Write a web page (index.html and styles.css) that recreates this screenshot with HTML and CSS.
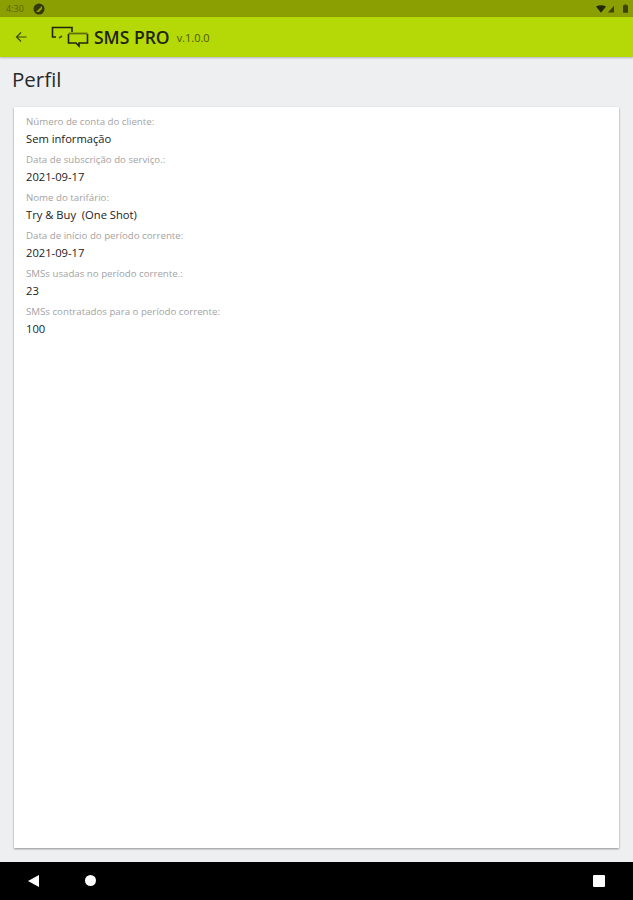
FILE: index.html
```html
<!DOCTYPE html>
<html lang="pt">
<head>
    <meta charset="UTF-8">
    <meta name="viewport" content="width=device-width, initial-scale=1.0">
    <title>SMS PRO - Perfil</title>
    <link rel="stylesheet" href="styles.css">
</head>
<body>
    <div class="status-bar">
        <span class="clock">4:30</span>
        <svg class="status-app" viewBox="0 0 12 12" width="12" height="12">
            <circle cx="6" cy="6" r="5.5" fill="#33390a" />
            <path d="M3 9 L9 3 L9 6 L6 9 Z" fill="#8f9f0a" />
        </svg>
        <div class="status-icons">
            <svg viewBox="0 0 12 9" width="10" height="8"><path d="M0 1.5 Q6 -1.5 12 1.5 L6 9 Z" fill="#23280a" /></svg>
            <svg class="signal" viewBox="0 0 8 9" width="6" height="8"><path d="M8 0 L8 9 L0 9 Z" fill="#3a4208" /></svg>
            <svg viewBox="0 0 6 10" width="5" height="9"><path d="M2 0 H4 V1 H6 V10 H0 V1 H2 Z" fill="#3a4208" /></svg>
        </div>
    </div>

    <header class="app-bar">
        <svg class="back" viewBox="0 0 12 12" width="12" height="12">
            <path d="M11.5 6 H1.5 M6 1.5 L1.5 6 L6 10.5" fill="none" stroke="#3d4a08" stroke-width="1.2" />
        </svg>
        <svg class="logo" viewBox="0 0 38 22" width="38" height="22">
            <path d="M21 6 V1.5 H1.5 V11 H5" fill="none" stroke="#20240a" stroke-width="1.6" />
            <path d="M8 12 L11 10" fill="none" stroke="#4a5608" stroke-width="1.6" />
            <path d="M17.5 8 V17 H25 L28 20 V17 H36.5 V8" fill="none" stroke="#20240a" stroke-width="1.6" />
            <path d="M17.5 7.5 H36.5" fill="none" stroke="#5f6e08" stroke-width="1.8" />
        </svg>
        <span class="brand">SMS PRO</span>
        <span class="version">v.1.0.0</span>
    </header>

    <main class="content">
        <h1 class="page-title">Perfil</h1>
        <section class="card">
            <div class="field">
                <div class="field-label">Número de conta do cliente:</div>
                <div class="field-value">Sem informação</div>
            </div>
            <div class="field">
                <div class="field-label">Data de subscrição do serviço.:</div>
                <div class="field-value">2021-09-17</div>
            </div>
            <div class="field">
                <div class="field-label">Nome do tarifário:</div>
                <div class="field-value">Try &amp; Buy &nbsp;(One Shot)</div>
            </div>
            <div class="field">
                <div class="field-label">Data de início do período corrente:</div>
                <div class="field-value">2021-09-17</div>
            </div>
            <div class="field">
                <div class="field-label">SMSs usadas no período corrente.:</div>
                <div class="field-value">23</div>
            </div>
            <div class="field">
                <div class="field-label">SMSs contratados para o período corrente:</div>
                <div class="field-value">100</div>
            </div>
        </section>
    </main>

    <nav class="nav-bar">
        <span class="nav-back"></span>
        <span class="nav-home"></span>
        <span class="nav-recent"></span>
    </nav>
</body>
</html>
```

FILE: styles.css
```css
* {
    box-sizing: border-box;
}
body {
    margin: 0;
    width: 633px;
    height: 900px;
    overflow: hidden;
    display: flex;
    flex-direction: column;
    background-color: #eeeff1;
    font-family: "Open Sans", "Liberation Sans", sans-serif;
}
.status-bar {
    height: 17px;
    flex-shrink: 0;
    display: flex;
    align-items: center;
    padding: 0 5px 0 6px;
    background: #8b9e02;
}
.clock {
    font-size: 9px;
    color: #5a6608;
}
.status-app {
    margin-left: 9px;
}
.status-icons {
    margin-left: auto;
    display: flex;
    align-items: center;
    gap: 2px;
}
.signal {
    margin-right: 7px;
}
.app-bar {
    height: 40px;
    flex-shrink: 0;
    display: flex;
    align-items: center;
    padding: 0 0 0 15px;
    background: #b5d906;
    box-shadow: 0 1px 2px rgba(0, 0, 0, 0.25);
    position: relative;
}
.logo {
    margin-left: 24px;
}
.brand {
    margin-left: 5px;
    font-size: 17.5px;
    font-weight: 600;
    color: #20240a;
}
.version {
    margin-left: 7px;
    font-size: 11px;
    color: #4c5a08;
}
.content {
    flex: 1;
    display: flex;
    flex-direction: column;
    padding: 0 14px 14px;
    min-height: 0;
}
.page-title {
    margin: 9px 0 14px -2px;
    font-size: 20.5px;
    line-height: 27px;
    font-weight: 400;
    color: #2a2a2a;
}
.card {
    flex: 1;
    padding: 6px 12px;
    background: #ffffff;
    box-shadow: 0 1px 2px rgba(0, 0, 0, 0.4);
}
.field {
    height: 38px;
    padding-top: 3px;
}
.field-label {
    font-size: 9.7px;
    line-height: 12px;
    color: #a3a3a3;
}
.field-value {
    margin-top: 4px;
    font-size: 11.2px;
    line-height: 14px;
    color: #222222;
}
.nav-bar {
    height: 38px;
    flex-shrink: 0;
    position: relative;
    background: #000000;
}
.nav-back {
    position: absolute;
    left: 28px;
    top: 13px;
    width: 0;
    height: 0;
    border-top: 6px solid transparent;
    border-bottom: 6px solid transparent;
    border-right: 11px solid #ffffff;
}
.nav-home {
    position: absolute;
    left: 85px;
    top: 13px;
    width: 11px;
    height: 11px;
    border-radius: 50%;
    background: #ffffff;
}
.nav-recent {
    position: absolute;
    left: 593px;
    top: 13px;
    width: 12px;
    height: 12px;
    border-radius: 1px;
    background: #ffffff;
}
```
